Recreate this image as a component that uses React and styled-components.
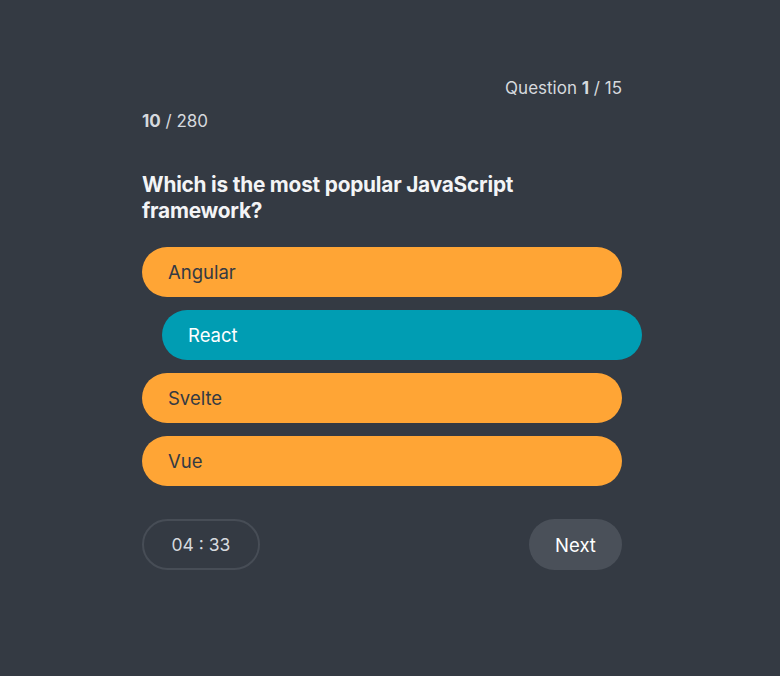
import React, { useState } from "react";
import styled, { createGlobalStyle } from "styled-components";

const GlobalStyle = createGlobalStyle`
  html, body {
    margin: 0;
    padding: 0;
    background: #343a43;
  }
  body {
    font-family: Inter, "Noto Sans", sans-serif;
    -webkit-font-smoothing: antialiased;
  }
`;

const Page = styled.div`
  min-height: 676px;
  display: flex;
  justify-content: center;
  padding: 76px 16px 0 0;
  box-sizing: border-box;
`;

const Quiz = styled.div`
  width: 480px;
  display: flex;
  flex-direction: column;
  color: #e4e6ea;
`;

const Progress = styled.div`
  align-self: flex-end;
  font-size: 17px;
  line-height: 24px;
  color: #d6d9de;
  b {
    font-weight: 700;
  }
`;

const Score = styled.div`
  margin-top: 9px;
  font-size: 17px;
  line-height: 24px;
  color: #d6d9de;
  b {
    font-weight: 700;
  }
`;

const Title = styled.h2`
  margin: 39px 0 23px;
  width: 420px;
  font-size: 20.8px;
  line-height: 26px;
  font-weight: 700;
  color: #f3f4f6;
  letter-spacing: -0.2px;
`;

const Options = styled.div`
  display: flex;
  flex-direction: column;
  gap: 13px;
`;

const Option = styled.button`
  height: 50px;
  border: none;
  border-radius: 25px;
  padding: 0 26px;
  text-align: left;
  font-family: inherit;
  font-size: 18.5px;
  cursor: pointer;
  background: ${(p) => (p.$selected ? "#009db3" : "#ffa535")};
  color: ${(p) => (p.$selected ? "#ffffff" : "#343a43")};
  transform: ${(p) => (p.$selected ? "translateX(20px)" : "none")};
`;

const Footer = styled.div`
  margin-top: 33px;
  display: flex;
  justify-content: space-between;
  align-items: center;
`;

const Timer = styled.div`
  width: 118px;
  height: 51px;
  box-sizing: border-box;
  border: 2px solid #474d56;
  border-radius: 26px;
  display: flex;
  align-items: center;
  justify-content: center;
  font-size: 17.5px;
  color: #d6d9de;
`;

const NextButton = styled.button`
  width: 93px;
  height: 51px;
  border: none;
  border-radius: 26px;
  background: #4a5059;
  color: #ffffff;
  font-family: inherit;
  font-size: 18.5px;
  cursor: pointer;
`;

const answers = ["Angular", "React", "Svelte", "Vue"];

const App = () => {
  const [selected, setSelected] = useState("React");

  return (
    <Page>
      <GlobalStyle />
      <Quiz>
        <Progress>
          Question <b>1</b> / 15
        </Progress>
        <Score>
          <b>10</b> / 280
        </Score>
        <Title>Which is the most popular JavaScript framework?</Title>
        <Options>
          {answers.map((a) => (
            <Option key={a} $selected={selected === a} onClick={() => setSelected(a)}>
              {a}
            </Option>
          ))}
        </Options>
        <Footer>
          <Timer>04 : 33</Timer>
          <NextButton>Next</NextButton>
        </Footer>
      </Quiz>
    </Page>
  );
};

export default App;
